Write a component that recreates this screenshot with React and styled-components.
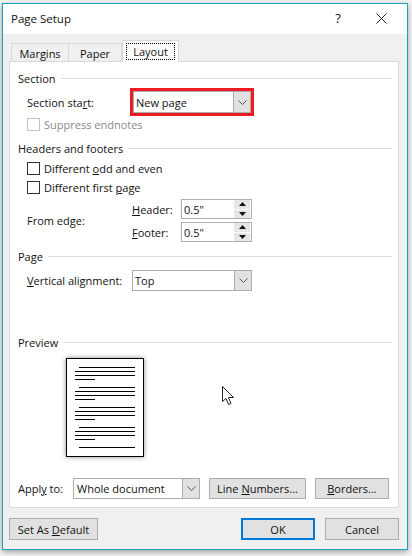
import styled, { createGlobalStyle } from "styled-components";

const GlobalStyle = createGlobalStyle`
  html, body { margin: 0; padding: 0; background: #f4f4f4; }
  body { width: 412px; height: 556px; overflow: hidden; font-family: "Open Sans", "Noto Sans", "Liberation Sans", sans-serif; font-size: 11px; color: #111; }
  #root { height: 556px; }
`;

const Page = styled.div`
  padding: 3px 0 0 2px;
`;
const Dialog = styled.div`
  width: 404px;
  height: 545px;
  border: 1px solid #18a0bb;
  background: #f0f0f0;
  box-shadow: 0 2px 6px rgba(0, 0, 0, 0.35);
  display: flex;
  flex-direction: column;
`;
const TitleBar = styled.div`
  height: 30px;
  background: #fff;
  display: flex;
  align-items: center;
  padding: 0 0 2px 8px;
  box-sizing: border-box;
  font-size: 11.5px;
`;
const TitleText = styled.div`
  flex: 1;
`;
const TitleButton = styled.div`
  width: 46px;
  display: flex;
  justify-content: center;
  align-items: center;
  font-size: 13px;
  margin-right: ${(p) => p.$mr || 0}px;
`;
const TabRow = styled.div`
  height: 28px;
  padding-left: 8px;
  display: flex;
  align-items: flex-end;
  margin-bottom: -1px;
  position: relative;
  z-index: 1;
`;
const Tab = styled.div`
  width: ${(p) => p.$w}px;
  height: ${(p) => (p.$active ? 22 : 19)}px;
  box-sizing: border-box;
  display: flex;
  justify-content: center;
  align-items: center;
  padding-top: ${(p) => (p.$active ? 0 : 1)}px;
  background: ${(p) => (p.$active ? "#fff" : "#f0f0f0")};
  border: 1px solid #d9d9d9;
  border-left-width: ${(p) => (p.$first || p.$active ? 1 : 0)}px;
  border-bottom: ${(p) => (p.$active ? "none" : "1px solid #d9d9d9")};
`;
const FocusLabel = styled.span`
  outline: 1px dotted #000;
  padding: 0 6px;
  line-height: 15px;
`;
const Panel = styled.div`
  margin: 0 8px 0 6px;
  height: 447px;
  box-sizing: border-box;
  background: #fff;
  border: 1px solid #d9d9d9;
  padding: 8px 6px 0 8px;
  display: flex;
  flex-direction: column;
  position: relative;
`;
const GroupHead = styled.div`
  display: flex;
  align-items: center;
  gap: 5px;
  height: 16px;
  margin-top: ${(p) => p.$mt || 0}px;
  &::after {
    content: "";
    flex: 1;
    height: 1px;
    background: #dcdcdc;
  }
`;
const Row = styled.div`
  display: flex;
  align-items: center;
  height: ${(p) => p.$h || 19}px;
  margin-top: ${(p) => p.$mt || 0}px;
  padding-left: ${(p) => p.$pl ?? 9}px;
  color: ${(p) => (p.$disabled ? "#8a8a8a" : "inherit")};
`;
const Label = styled.div`
  width: ${(p) => p.$w}px;
  flex: none;
`;
const Check = styled.span`
  width: 11px;
  height: 11px;
  border: 1px solid ${(p) => (p.$disabled ? "#c4c4c4" : "#333")};
  margin-right: 4px;
  flex: none;
  background: #fff;
`;
const Highlight = styled.div`
  border: 3px solid #ed1c24;
  display: flex;
`;
const Combo = styled.div`
  width: ${(p) => p.$w}px;
  height: ${(p) => p.$h || 21}px;
  box-sizing: border-box;
  border: 1px solid #adadad;
  background: #fff;
  display: flex;
  align-items: center;
  padding-left: ${(p) => p.$pad || 2}px;
`;
const ComboText = styled.div`
  flex: 1;
`;
const ComboArrow = styled.div`
  width: 16px;
  align-self: stretch;
  background: #e1e1e1;
  border-left: 1px solid #adadad;
  display: flex;
  align-items: center;
  justify-content: center;
`;
const EdgeBlock = styled.div`
  display: flex;
  align-items: center;
  padding-left: 9px;
  margin-top: 2px;
`;
const EdgeRows = styled.div`
  display: flex;
  flex-direction: column;
  gap: 3px;
`;
const SpinRow = styled.div`
  display: flex;
  align-items: center;
  height: 20px;
`;
const Spin = styled.div`
  width: 71px;
  height: 20px;
  box-sizing: border-box;
  border: 1px solid #adadad;
  display: flex;
  align-items: center;
  padding-left: 2px;
`;
const SpinButtons = styled.div`
  width: 16px;
  height: 18px;
  margin-right: 1px;
  display: flex;
  flex-direction: column;
  gap: 1px;
`;
const SpinButton = styled.div`
  flex: 1;
  background: #e6e6e6;
  display: flex;
  align-items: center;
  justify-content: center;
`;
const Sheet = styled.div`
  width: 78px;
  height: 99px;
  box-sizing: border-box;
  margin: 8px 0 0 48px;
  background: #fff;
  border: 1px solid #000;
  box-shadow: 0 0 5px rgba(0, 0, 0, 0.45);
`;
const Pointer = styled.svg`
  position: absolute;
  left: 212px;
  top: 324px;
`;
const ApplyRow = styled.div`
  display: flex;
  align-items: center;
  margin-top: 21px;
  height: 21px;
`;
const Button = styled.div`
  width: ${(p) => p.$w}px;
  height: ${(p) => p.$h || 21}px;
  box-sizing: border-box;
  margin-left: ${(p) => p.$ml || 0}px;
  flex: none;
  background: #e1e1e1;
  border: ${(p) => (p.$primary ? "2px solid #0078d7" : "1px solid #adadad")};
  display: flex;
  align-items: center;
  justify-content: center;
`;
const Footer = styled.div`
  display: flex;
  align-items: center;
  padding: 10px 8px 0 6px;
`;
const Spacer = styled.div`
  flex: 1;
`;

const Chevron = () => (
  <svg width="9" height="5" viewBox="0 0 9 5">
    <path d="M0.5 0.5 L4.5 4.5 L8.5 0.5" fill="none" stroke="#555" strokeWidth="1" />
  </svg>
);

const Spinner = ({ down }) => (
  <svg width="7" height="4" viewBox="0 0 7 4">
    <path d={down ? "M0 0 H7 L3.5 4 Z" : "M0 4 H7 L3.5 0 Z"} fill="#111" />
  </svg>
);

const previewLines = [0, 20, 40, 60];

const PreviewLines = () => (
  <svg width="76" height="97" viewBox="0 0 76 97">
    <g stroke="#000" strokeWidth="1">
      {previewLines.map((y) => (
        <g key={y}>
          <path d={`M12 ${8.5 + y} H68`} />
          <path d={`M8 ${12.5 + y} H68`} />
          <path d={`M8 ${16.5 + y} H68`} />
          <path d={`M8 ${20.5 + y} H28`} />
        </g>
      ))}
      <path d="M12 88.5 H68" />
    </g>
  </svg>
);

export default function App() {
  return (
    <Page>
      <GlobalStyle />
      <Dialog>
        <TitleBar>
          <TitleText>Page Setup</TitleText>
          <TitleButton $mr={-3}>?</TitleButton>
          <TitleButton $mr={3}>
            <svg width="11" height="11" viewBox="0 0 11 11">
              <path d="M0.5 0.5 L10.5 10.5 M10.5 0.5 L0.5 10.5" stroke="#222" strokeWidth="1" />
            </svg>
          </TitleButton>
        </TitleBar>
        <TabRow>
          <Tab $w={58} $first>Margins</Tab>
          <Tab $w={53}>Paper</Tab>
          <Tab $w={57} $active><FocusLabel>Layout</FocusLabel></Tab>
        </TabRow>
        <Panel>
          <GroupHead>Section</GroupHead>
          <Row $h={26} $mt={3}>
            <Label $w={103}>Section sta<u>r</u>t:</Label>
            <Highlight>
              <Combo $w={118} $h={22}>
                <ComboText>New page</ComboText>
                <ComboArrow><Chevron /></ComboArrow>
              </Combo>
            </Highlight>
          </Row>
          <Row $disabled>
            <Check $disabled />
            <span>Suppress endnotes</span>
          </Row>
          <GroupHead $mt={6}>Headers and footers</GroupHead>
          <Row $mt={3}>
            <Check />
            <span>Different <u>o</u>dd and even</span>
          </Row>
          <Row>
            <Check />
            <span>Different first <u>p</u>age</span>
          </Row>
          <EdgeBlock>
            <Label $w={105}>From edge:</Label>
            <EdgeRows>
              <SpinRow>
                <Label $w={49}><u>H</u>eader:</Label>
                <Spin>
                  <ComboText>0.5"</ComboText>
                  <SpinButtons>
                    <SpinButton><Spinner /></SpinButton>
                    <SpinButton><Spinner down /></SpinButton>
                  </SpinButtons>
                </Spin>
              </SpinRow>
              <SpinRow>
                <Label $w={49}><u>F</u>ooter:</Label>
                <Spin>
                  <ComboText>0.5"</ComboText>
                  <SpinButtons>
                    <SpinButton><Spinner /></SpinButton>
                    <SpinButton><Spinner down /></SpinButton>
                  </SpinButtons>
                </Spin>
              </SpinRow>
            </EdgeRows>
          </EdgeBlock>
          <GroupHead $mt={6}>Page</GroupHead>
          <Row $h={21} $mt={6}>
            <Label $w={105}><u>V</u>ertical alignment:</Label>
            <Combo $w={120}>
              <ComboText>Top</ComboText>
              <ComboArrow><Chevron /></ComboArrow>
            </Combo>
          </Row>
          <GroupHead $mt={43}>Preview</GroupHead>
          <Sheet><PreviewLines /></Sheet>
          <ApplyRow>
            <Label $w={55}><span>Appl<u>y</u> to:</span></Label>
            <Combo $w={127} $pad={3}>
              <ComboText>Whole document</ComboText>
              <ComboArrow><Chevron /></ComboArrow>
            </Combo>
            <Button $w={97} $ml={9}><span>Line <u>N</u>umbers...</span></Button>
            <Button $w={74} $ml={9}><span><u>B</u>orders...</span></Button>
          </ApplyRow>
          <Pointer width="13" height="20" viewBox="0 0 13 20">
            <path d="M0.5 0.5 V15.5 L4 12.5 L6.5 18.5 L9 17.5 L6.5 11.5 H11.5 Z" fill="#fff" stroke="#222" strokeWidth="1" />
          </Pointer>
        </Panel>
        <Footer>
          <Button $w={89} $h={22}><span>Set As <u>D</u>efault</span></Button>
          <Spacer />
          <Button $w={74} $h={22} $primary>OK</Button>
          <Button $w={74} $h={22} $ml={10}>Cancel</Button>
        </Footer>
      </Dialog>
    </Page>
  );
}
